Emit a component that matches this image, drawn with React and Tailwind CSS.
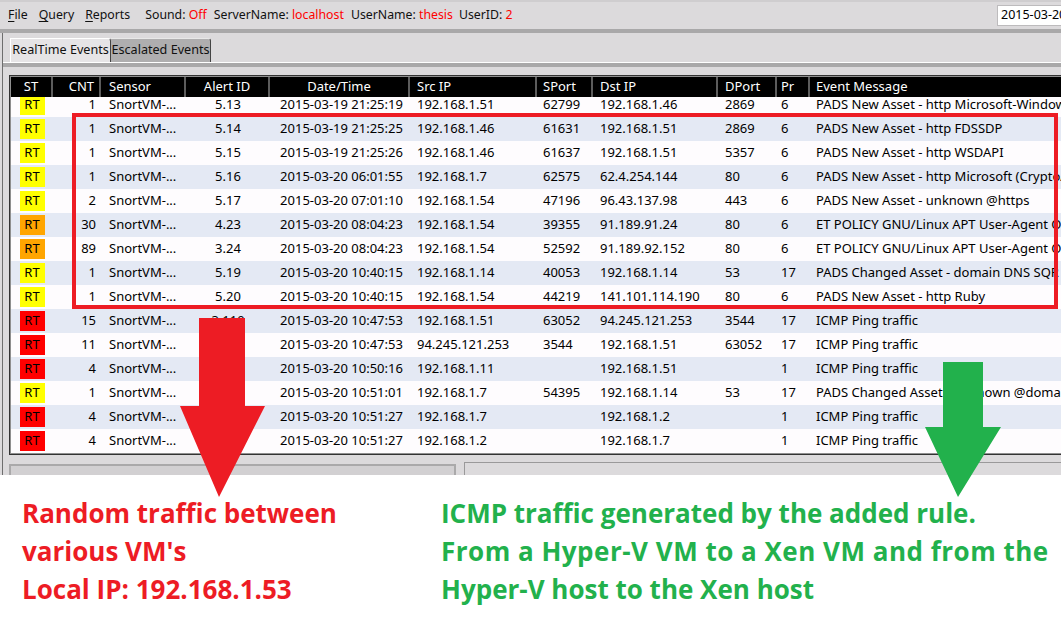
import React from 'react'

const COLS = [
  { key: 'st',    label: 'ST',            w: 'w-[42px]',  head: 'justify-center',        cell: 'justify-center' },
  { key: 'cnt',   label: 'CNT',           w: 'w-[48px]',  head: 'justify-end pr-[5px]',  cell: 'justify-end pr-[5px]' },
  { key: 'sensor',label: 'Sensor',        w: 'w-[85px]',  head: 'pl-[8px]',              cell: 'pl-[8px]' },
  { key: 'alert', label: 'Alert ID',      w: 'w-[84px]',  head: 'justify-center',        cell: 'justify-center' },
  { key: 'date',  label: 'Date/Time',     w: 'w-[140px]', head: 'justify-center',        cell: 'justify-center pl-[3px]' },
  { key: 'src',   label: 'Src IP',        w: 'w-[127px]', head: 'pl-[7px]',              cell: 'pl-[7px]' },
  { key: 'sport', label: 'SPort',         w: 'w-[56px]',  head: 'pl-[6px]',              cell: 'pl-[6px]' },
  { key: 'dst',   label: 'Dst IP',        w: 'w-[125px]', head: 'pl-[7px]',              cell: 'pl-[7px]' },
  { key: 'dport', label: 'DPort',         w: 'w-[59px]',  head: 'pl-[7px]',              cell: 'pl-[7px]' },
  { key: 'pr',    label: 'Pr',            w: 'w-[33px]',  head: 'pl-[4px]',              cell: 'pl-[4px]' },
  { key: 'msg',   label: 'Event Message', w: 'w-[260px]', head: 'pl-[6px]',              cell: 'pl-[6px]' },
]

const BADGE = {
  y: 'bg-[#ffff00]',
  o: 'bg-[#ffa500]',
  r: 'bg-[#ff0000]',
}

const ROWS = [
  ['y', '1',  '5.13',  '2015-03-19 21:25:19', '192.168.1.51',   '62799', '192.168.1.46',    '2869',  '6',  'PADS New Asset - http Microsoft-Windows/6.1'],
  ['y', '1',  '5.14',  '2015-03-19 21:25:25', '192.168.1.46',   '61631', '192.168.1.51',    '2869',  '6',  'PADS New Asset - http FDSSDP'],
  ['y', '1',  '5.15',  '2015-03-19 21:25:26', '192.168.1.46',   '61637', '192.168.1.51',    '5357',  '6',  'PADS New Asset - http WSDAPI'],
  ['y', '1',  '5.16',  '2015-03-20 06:01:55', '192.168.1.7',    '62575', '62.4.254.144',    '80',    '6',  'PADS New Asset - http Microsoft (CryptoAPI)'],
  ['y', '2',  '5.17',  '2015-03-20 07:01:10', '192.168.1.54',   '47196', '96.43.137.98',    '443',   '6',  'PADS New Asset - unknown @https'],
  ['o', '30', '4.23',  '2015-03-20 08:04:23', '192.168.1.54',   '39355', '91.189.91.24',    '80',    '6',  'ET POLICY GNU/Linux APT User-Agent Outbound'],
  ['o', '89', '3.24',  '2015-03-20 08:04:23', '192.168.1.54',   '52592', '91.189.92.152',   '80',    '6',  'ET POLICY GNU/Linux APT User-Agent Outbound'],
  ['y', '1',  '5.19',  '2015-03-20 10:40:15', '192.168.1.14',   '40053', '192.168.1.14',    '53',    '17', 'PADS Changed Asset - domain DNS SQR No Error'],
  ['y', '1',  '5.20',  '2015-03-20 10:40:15', '192.168.1.54',   '44219', '141.101.114.190', '80',    '6',  'PADS New Asset - http Ruby'],
  ['r', '15', '3.110', '2015-03-20 10:47:53', '192.168.1.51',   '63052', '94.245.121.253',  '3544',  '17', 'ICMP Ping traffic'],
  ['r', '11', '3.111', '2015-03-20 10:47:53', '94.245.121.253', '3544',  '192.168.1.51',    '63052', '17', 'ICMP Ping traffic'],
  ['r', '4',  '3.112', '2015-03-20 10:50:16', '192.168.1.11',   '',      '192.168.1.51',    '',      '1',  'ICMP Ping traffic'],
  ['y', '1',  '5.21',  '2015-03-20 10:51:01', '192.168.1.7',    '54395', '192.168.1.14',    '53',    '17', 'PADS Changed Asset - unknown @domain'],
  ['r', '4',  '3.113', '2015-03-20 10:51:27', '192.168.1.7',    '',      '192.168.1.2',     '',      '1',  'ICMP Ping traffic'],
  ['r', '4',  '3.114', '2015-03-20 10:51:27', '192.168.1.2',    '',      '192.168.1.7',     '',      '1',  'ICMP Ping traffic'],
]

function MenuItem({ first, rest }) {
  return (
    <span>
      <span className="underline underline-offset-2">{first}</span>
      {rest}
    </span>
  )
}

function Row({ r, i }) {
  const [st, ...vals] = r
  const stripe = i % 2 === 0 ? 'bg-[#fefcfe]' : 'bg-[#e4e9f4]'
  return (
    <div className={`flex h-[24px] items-center ${stripe}`}>
      <div className={`${COLS[0].w} flex-none flex justify-center`}>
        <span className={`${BADGE[st]} w-[25px] h-[20px] flex items-center justify-center text-black`}>RT</span>
      </div>
      <div className={`${COLS[1].w} flex-none flex ${COLS[1].cell}`}>{vals[0]}</div>
      <div className={`${COLS[2].w} flex-none flex ${COLS[2].cell}`}>SnortVM-...</div>
      {vals.slice(1).map((v, j) => {
        const c = COLS[j + 3]
        return (
          <div key={c.key} className={`${c.w} flex-none flex whitespace-nowrap overflow-hidden ${c.cell}`}>{v}</div>
        )
      })}
    </div>
  )
}

export default function App() {
  return (
    <div
      className="relative w-[1061px] h-[621px] overflow-hidden bg-[#dcdadc] text-[13px] text-[#111]"
      style={{ fontFamily: '"Noto Sans", "DejaVu Sans", sans-serif' }}
    >
      {/* menu bar */}
      <div className="h-[29px] border-t-2 border-[#cfcdcf] flex items-center pl-[8px] whitespace-nowrap text-[12.3px]">
        <MenuItem first="F" rest="ile" />
        <span className="ml-[11px]"><MenuItem first="Q" rest="uery" /></span>
        <span className="ml-[11px]"><MenuItem first="R" rest="eports" /></span>
        <span className="ml-[15px]">Sound: <span className="text-[#ff0000]">Off</span></span>
        <span className="ml-[7px]">ServerName: <span className="text-[#ff0000]">localhost</span></span>
        <span className="ml-[7px]">UserName: <span className="text-[#ff0000]">thesis</span></span>
        <span className="ml-[6px]">UserID: <span className="text-[#ff0000]">2</span></span>
        <div className="ml-auto mr-[-30px] w-[94px] h-[21px] bg-white border border-[#bdbbbd] flex items-center pl-[3px] text-black text-[12.5px]">
          2015-03-20 10:52
        </div>
      </div>
      <div className="h-[4px] bg-[#a9a8a9]" />

      {/* main area with window edge */}
      <div className="ml-[2px] border-l border-[#6e6e6e]">
        {/* tabs */}
        <div className="h-[29px] flex items-end pl-[7px] text-[12.6px] whitespace-nowrap">
          <div className="h-[24px] w-[101px] bg-[#e6e4e6] border-t border-l border-white rounded-tr-[3px] border-r border-r-[#444] flex items-center justify-center">
            RealTime Events
          </div>
          <div className="h-[24px] w-[100px] bg-[#afaeaf] border-t border-[#e8e8e8] rounded-tr-[3px] border-r border-r-[#444] flex items-center justify-center">
            Escalated Events
          </div>
        </div>
        <div className="h-[1px] bg-white" />
        <div className="h-[4px] bg-[#a9a8a9]" />

        {/* table frame */}
        <div className="ml-[6px] mt-[8px] h-[380px] border border-[#333] border-r-0 bg-white overflow-hidden">
          <div className="h-full border border-[#8f8f8f] border-r-0 flex flex-col">
            {/* header */}
            <div className="flex h-[20px] flex-none bg-black text-white">
              {COLS.map((c, i) => (
                <div
                  key={c.key}
                  className={`${c.w} flex-none flex items-center whitespace-nowrap ${c.head} ${i < COLS.length - 1 ? 'border-r-2 border-[#5c5c5c]' : ''}`}
                >
                  {c.label}
                </div>
              ))}
            </div>
            {/* rows */}
            <div className="flex-1 overflow-hidden text-black">
              <div className="-mt-[4px]">
                {ROWS.map((r, i) => (
                  <Row key={i} r={r} i={i} />
                ))}
              </div>
            </div>
          </div>
        </div>

        {/* lower panels */}
        <div className="h-[20px] flex">
          <div className="ml-[6px] mt-[9px] w-[447px] border-2 border-b-0 border-[#aaa9aa] bg-[#d2d0d2]" />
          <div className="ml-[8px] mt-[7px] flex-1 border-l border-t border-[#9a999a]" />
        </div>
      </div>

      {/* annotation */}
      <div
        className="h-[146px] bg-white flex pt-[19px] font-bold text-[26px] leading-[38px] whitespace-nowrap"
        style={{ fontFamily: '"Open Sans", Lato, sans-serif' }}
      >
        <div className="ml-[22px] w-[419px] text-[#ed1c24]">
          <div>Random traffic between</div>
          <div>various VM's</div>
          <div>Local IP: 192.168.1.53</div>
        </div>
        <div className="text-[#22b14c]">
          <div>ICMP traffic generated by the added rule.</div>
          <div className="tracking-[0.5px]">From a Hyper-V VM to a Xen VM and from the</div>
          <div>Hyper-V host to the Xen host</div>
        </div>
      </div>

      {/* highlight box */}
      <div className="absolute left-[72px] top-[113px] w-[986px] h-[196px] border-4 border-[#ed1c24]" />

      {/* arrows */}
      <svg className="absolute left-0 top-0" width="1061" height="621" viewBox="0 0 1061 621">
        <polygon fill="#ed1c24" points="199,318 245,318 245,406 265,406 219,497 180,406 199,406" />
        <polygon fill="#22b14c" points="943,362 983,362 983,427 1001,427 958,497 925,427 943,427" />
      </svg>
    </div>
  )
}
